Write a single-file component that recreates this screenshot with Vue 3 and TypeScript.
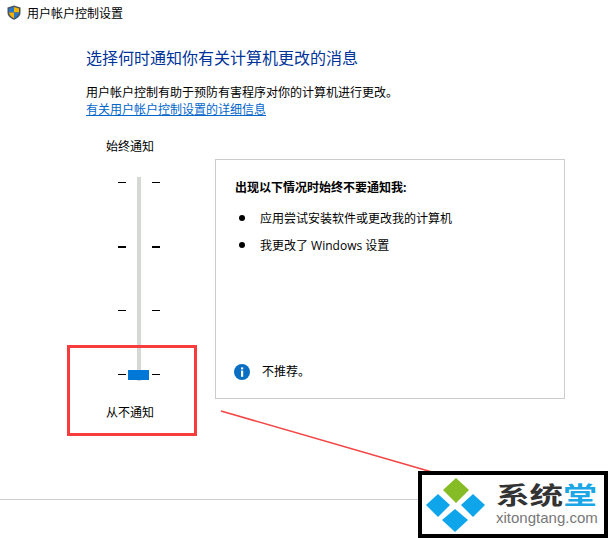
<script setup lang="ts">
interface Tick {
  bold: boolean
}

const ticks: Tick[] = [{ bold: false }, { bold: true }, { bold: false }, { bold: false }]
const bullets = ['应用尝试安装软件或更改我的计算机', '我更改了 Windows 设置']
</script>

<template>
  <div class="page">
    <header class="titlebar">
      <svg class="shield" width="14" height="15" viewBox="0 0 14 15">
        <path d="M7 0.5 L13.5 2.5 V7.5 C13.5 11 10.5 13.5 7 14.8 C3.5 13.5 0.5 11 0.5 7.5 V2.5 Z" fill="#4a5560" />
        <path d="M7 2 L12 3.4 V7.4 H7 Z" fill="#f4b400" />
        <path d="M7 2 L2 3.4 V7.4 H7 Z" fill="#2a78c8" />
        <path d="M7 7.4 H2 C2.3 10 4.5 12 7 13.2 Z" fill="#f4b400" />
        <path d="M7 7.4 H12 C11.7 10 9.5 12 7 13.2 Z" fill="#2a78c8" />
      </svg>
      <span>用户帐户控制设置</span>
    </header>

    <main class="content">
      <h1 class="heading">选择何时通知你有关计算机更改的消息</h1>
      <p class="intro">用户帐户控制有助于预防有害程序对你的计算机进行更改。</p>
      <a class="link" href="#">有关用户帐户控制设置的详细信息</a>

      <div class="settings">
        <div class="slider-col">
          <div class="slider-label">始终通知</div>
          <div class="slider">
            <div class="track"></div>
            <div v-for="(tick, i) in ticks" :key="i" class="tick-row" :class="{ bold: tick.bold }">
              <span class="tick"></span>
              <span class="tick"></span>
            </div>
            <div class="thumb"></div>
          </div>
          <div class="slider-label bottom">从不通知</div>
        </div>

        <section class="panel">
          <div class="panel-title">出现以下情况时始终不要通知我:</div>
          <ul class="bullets">
            <li v-for="item in bullets" :key="item">{{ item }}</li>
          </ul>
          <div class="notice">
            <svg width="16" height="16" viewBox="0 0 16 16">
              <circle cx="8" cy="8" r="8" fill="#0a6fc2" />
              <rect x="7" y="6.6" width="2.2" height="6.2" fill="#fff" />
              <rect x="7" y="3.4" width="2.2" height="2" fill="#fff" />
            </svg>
            <span>不推荐。</span>
          </div>
        </section>
      </div>
    </main>

    <footer class="footer"></footer>

    <!-- annotation drawn on top of the screenshot -->
    <div class="red-box"></div>
    <svg class="red-line" width="608" height="538" viewBox="0 0 608 538">
      <line x1="221" y1="411" x2="432" y2="472" stroke="#f44545" stroke-width="1.6" />
    </svg>

    <div class="watermark">
      <svg class="logo" width="59" height="54" viewBox="0 0 59 54">
        <polygon points="30,0 43,12 30,25 17,12" fill="#86bc25" />
        <polygon points="12,16 24,27 12,39 0,27" fill="#0ea5ea" />
        <polygon points="47,16 59,27 47,39 35,27" fill="#0ea5ea" />
        <polygon points="29,31 42,42 29,54 16,42" fill="#0ea5ea" />
      </svg>
      <div class="brand">
        <div class="brand-name">系统<span>堂</span></div>
        <div class="brand-url">xitongtang.com</div>
      </div>
    </div>
  </div>
</template>

<style scoped>
.page {
  position: relative;
  width: 608px;
  height: 538px;
  overflow: hidden;
  display: flex;
  flex-direction: column;
  background: #fff;
  color: #000;
  font-family: "Open Sans", "Noto Sans CJK SC", sans-serif;
  font-size: 12px;
}

.titlebar {
  display: flex;
  align-items: center;
  gap: 6px;
  height: 25px;
  padding-left: 7px;
  flex-shrink: 0;
}

.shield {
  flex-shrink: 0;
}

.content {
  flex: 1;
  padding: 22px 43px 0 86px;
}

.heading {
  margin: 0;
  font-size: 16px;
  font-weight: 400;
  line-height: 22px;
  color: #003399;
}

.intro {
  margin: 16px 0 0;
  line-height: 16px;
}

.link {
  display: block;
  margin-top: 1px;
  line-height: 16px;
  color: #0066cc;
}

.settings {
  display: flex;
  align-items: flex-start;
  margin-top: 8px;
}

.slider-col {
  width: 129px;
  flex-shrink: 0;
  padding-left: 20px;
  box-sizing: border-box;
}

.slider-label {
  width: 48px;
  line-height: 16px;
  margin-top: 13px;
}

.slider-label.bottom {
  margin-top: 24px;
}

.slider {
  position: relative;
  width: 42px;
  height: 204px;
  margin: 22px 0 0 12px;
  display: flex;
  flex-direction: column;
  justify-content: space-between;
  padding: 5px 0 6px;
  box-sizing: border-box;
}

.track {
  position: absolute;
  left: 19px;
  top: 0;
  width: 4px;
  height: 204px;
  background: #d6d8d6;
}

.tick-row {
  display: flex;
  justify-content: space-between;
  height: 1px;
}

.tick {
  width: 8px;
  height: 1px;
  background: #000;
}

.tick-row.bold .tick {
  height: 2px;
}

.thumb {
  position: absolute;
  left: 10px;
  bottom: 1px;
  width: 21px;
  height: 10px;
  background: #0078d7;
}

.panel {
  position: relative;
  flex: 1;
  height: 240px;
  box-sizing: border-box;
  border: 1px solid #cccccc;
  padding: 20px 19px;
  margin-top: 33px;
}

.panel-title {
  font-weight: 700;
  line-height: 16px;
}

.bullets {
  margin: 15px 0 0;
  padding: 0 0 0 25px;
  line-height: 16px;
  list-style: none;
}

.bullets li {
  position: relative;
}

.bullets li::before {
  content: "";
  position: absolute;
  left: -21px;
  top: 4px;
  width: 6px;
  height: 6px;
  border-radius: 50%;
  background: #000;
}

.bullets li + li {
  margin-top: 11px;
}

.notice {
  position: absolute;
  left: 18px;
  top: 204px;
  display: flex;
  align-items: center;
  gap: 12px;
  line-height: 16px;
}

.footer {
  height: 38px;
  flex-shrink: 0;
  border-top: 1px solid #cfcfcf;
}

.red-box {
  position: absolute;
  left: 67px;
  top: 345px;
  width: 130px;
  height: 91px;
  box-sizing: border-box;
  border: 3px solid #f63c3c;
}

.red-line {
  position: absolute;
  left: 0;
  top: 0;
  pointer-events: none;
}

.watermark {
  position: absolute;
  left: 418px;
  top: 471px;
  width: 190px;
  height: 67px;
  box-sizing: border-box;
  border: 4px solid #000;
  background: #fff;
  display: flex;
  align-items: center;
  gap: 11px;
  padding-left: 4px;
}

.logo {
  flex-shrink: 0;
}

.brand-name {
  font-family: "Noto Sans CJK SC", sans-serif;
  font-size: 24px;
  font-weight: 700;
  line-height: 22px;
  color: #333;
  transform: scaleX(1.4);
  transform-origin: left center;
  white-space: nowrap;
}

.brand-name span {
  color: #1ba7e6;
}

.brand-url {
  margin-top: 4px;
  font-family: "Liberation Sans", sans-serif;
  font-size: 15px;
  line-height: 18px;
  color: #777;
}
</style>
